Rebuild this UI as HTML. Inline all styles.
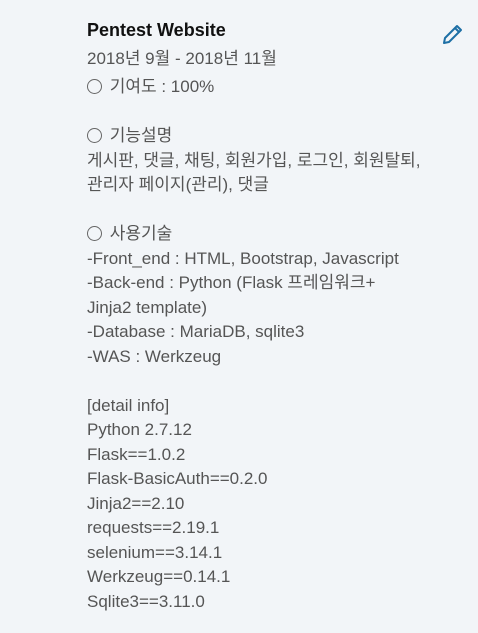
<!DOCTYPE html>
<html><head><meta charset="utf-8"><style>
html,body{margin:0;padding:0;width:478px;height:633px;overflow:hidden;background:#f2f5f8;}
body{font-family:"Liberation Sans","Noto Sans CJK KR",sans-serif;}
.t{position:absolute;left:87px;top:20px;font-size:18px;font-weight:bold;color:#111;}
.d{position:absolute;left:87px;top:44px;font-size:17px;color:#555;}
.b{position:absolute;left:87px;top:75px;font-size:17px;line-height:24.5px;color:#555;white-space:pre;}
.c{display:inline-block;width:13px;height:13px;border:1px solid #666;border-radius:50%;vertical-align:-2px;margin-right:3px;}
svg{position:absolute;left:440px;top:23px;}
</style></head><body>
<div class="t">Pentest Website</div>
<div class="d">2018년 9월 - 2018년 11월</div>
<svg width="24" height="24" viewBox="0 0 24 24"><path d="M4 20 L5 15 L17 3 L21 7 L9 19 Z M15 5 L19 9" fill="none" stroke="#1d6fa5" stroke-width="2" stroke-linejoin="round"/></svg>
<div class="b"><span class="c"></span> 기여도 : 100%

<span class="c"></span> 기능설명
게시판, 댓글, 채팅, 회원가입, 로그인, 회원탈퇴,
관리자 페이지(관리), 댓글

<span class="c"></span> 사용기술
-Front_end : HTML, Bootstrap, Javascript
-Back-end : Python (Flask 프레임워크+
Jinja2 template)
-Database : MariaDB, sqlite3
-WAS : Werkzeug

[detail info]
Python 2.7.12
Flask==1.0.2
Flask-BasicAuth==0.2.0
Jinja2==2.10
requests==2.19.1
selenium==3.14.1
Werkzeug==0.14.1
Sqlite3==3.11.0</div>
</body></html>
